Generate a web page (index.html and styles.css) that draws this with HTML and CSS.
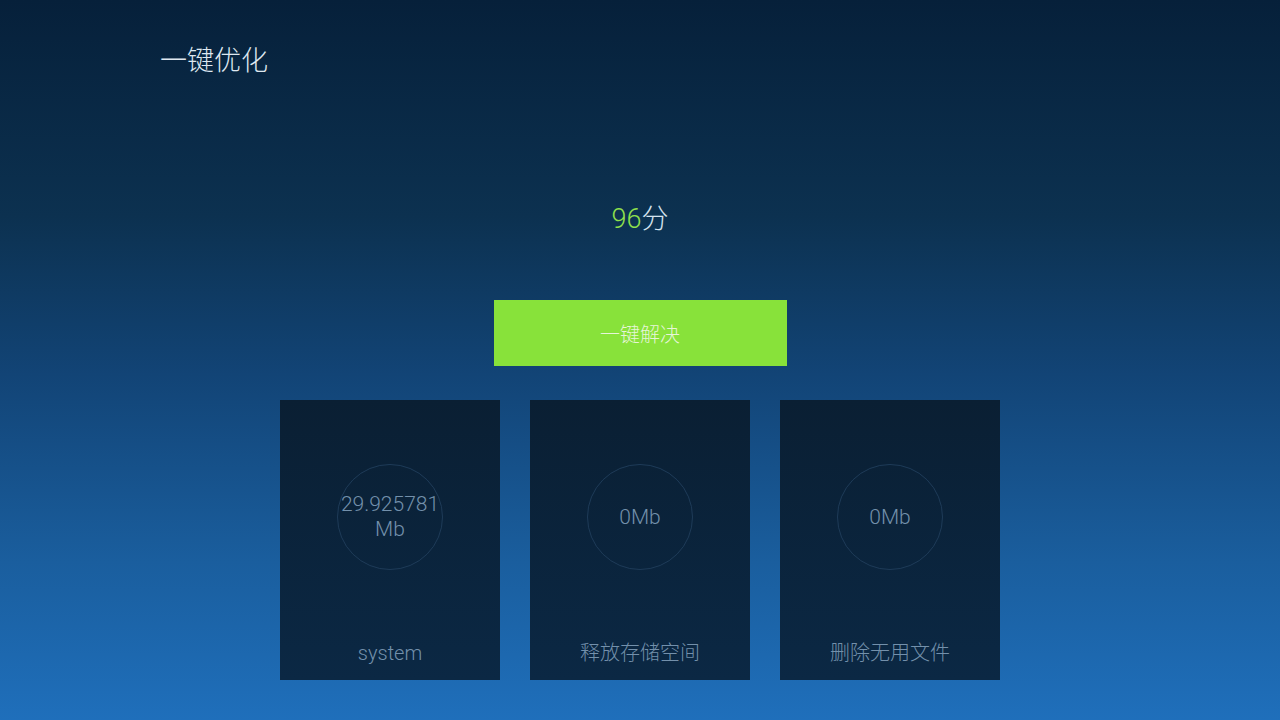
FILE: index.html
```html
<!DOCTYPE html>
<html>
<head>
<meta charset="utf-8">
<link rel="stylesheet" href="styles.css">
</head>
<body>
<div class="page">
  <div class="title">一键优化</div>
  <div class="score"><span class="num">96</span>分</div>
  <div class="btn">一键解决</div>
  <div class="cards">
    <div class="card">
      <div class="ring"><span>29.925781<br>Mb</span></div>
      <div class="label">system</div>
    </div>
    <div class="card">
      <div class="ring"><span>0Mb</span></div>
      <div class="label">释放存储空间</div>
    </div>
    <div class="card">
      <div class="ring"><span>0Mb</span></div>
      <div class="label">删除无用文件</div>
    </div>
  </div>
</div>
</body>
</html>
```
FILE: styles.css
```css
html, body {
  margin: 0;
  padding: 0;
}
body {
  font-family: Roboto, "Noto Sans CJK SC", sans-serif;
}
.page {
  width: 1280px;
  height: 720px;
  overflow: hidden;
  background: linear-gradient(to bottom, #06203a 0%, #0c3150 30%, #124476 52%, #1a5e9e 78%, #1f6fbb 100%);
  display: flex;
  flex-direction: column;
  align-items: center;
}
.title {
  align-self: flex-start;
  margin: 46px 0 0 160px;
  font-size: 27px;
  line-height: 30px;
  font-weight: 300;
  color: #dfe8f0;
}
.score {
  margin-top: 128px;
  font-size: 27px;
  line-height: 30px;
  color: #d4e2ee;
  font-weight: 300;
}
.score .num {
  color: #8fe04c;
}
.btn {
  margin-top: 66px;
  width: 293px;
  height: 66px;
  background: #88e23a;
  color: #e6f5d8;
  font-size: 20px;
  font-weight: 300;
  display: flex;
  align-items: center;
  justify-content: center;
}
.cards {
  margin-top: 34px;
  display: flex;
  gap: 30px;
}
.card {
  width: 220px;
  height: 280px;
  background: linear-gradient(to bottom, #0a1f33 0%, #0b2844 100%);
  display: flex;
  flex-direction: column;
  align-items: center;
}
.ring {
  margin-top: 64px;
  width: 104px;
  height: 104px;
  border: 1.5px solid #1e3b58;
  border-radius: 50%;
  display: flex;
  align-items: center;
  justify-content: center;
  text-align: center;
  color: #7390ab;
  font-size: 21px;
  font-weight: 300;
  line-height: 25px;
}
.ring span {
  white-space: nowrap;
}
.label {
  margin-top: auto;
  margin-bottom: 14px;
  font-size: 20px;
  line-height: 26px;
  color: #7390ab;
  font-weight: 300;
}
```
